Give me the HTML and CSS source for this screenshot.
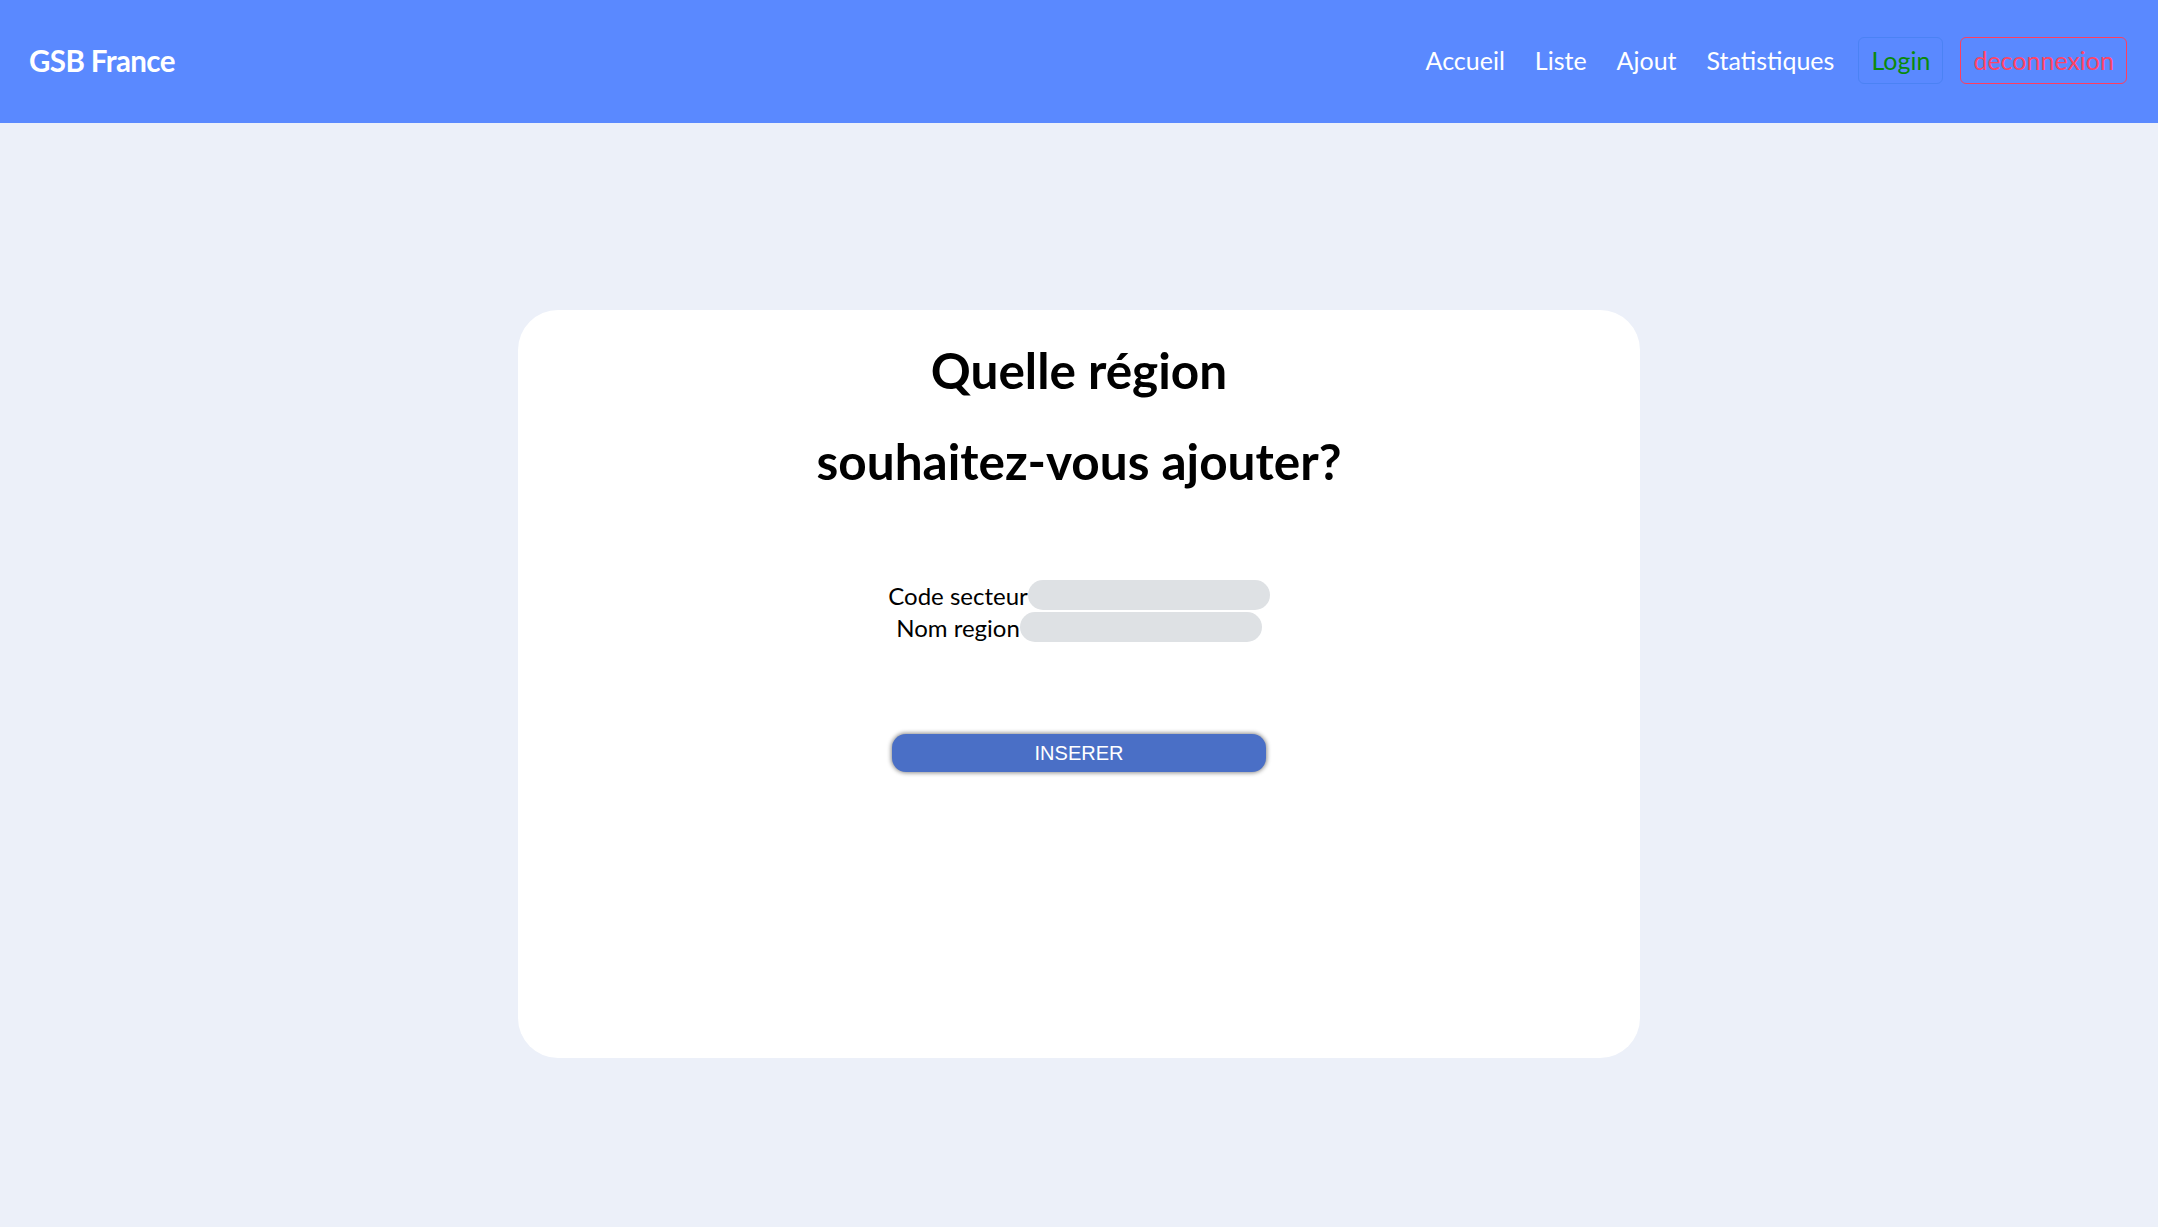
FILE: index.html
```html
<!DOCTYPE html>
<html lang="fr">
<head>
<meta charset="utf-8">
<title>GSB France</title>
<link rel="stylesheet" href="styles.css">
</head>
<body>
<nav class="navbar">
  <a class="brand" href="#">GSB France</a>
  <ul class="nav-links">
    <li><a href="#">Accueil</a></li>
    <li><a href="#">Liste</a></li>
    <li><a href="#">Ajout</a></li>
    <li><a href="#">Statistiques</a></li>
    <li><a class="btn-login" href="#">Login</a></li>
    <li><a class="btn-logout" href="#">deconnexion</a></li>
  </ul>
</nav>
<main class="page">
  <section class="card">
    <h1 class="title">Quelle région<br>souhaitez-vous ajouter?</h1>
    <form class="form">
      <div class="row"><label class="label">Code secteur</label><input class="field" type="text"></div>
      <div class="row"><label class="label">Nom region</label><input class="field" type="text"></div>
      <button class="submit" type="button">INSERER</button>
    </form>
  </section>
</main>
</body>
</html>
```
FILE: styles.css
```css
* { box-sizing: border-box; }
html, body { margin: 0; padding: 0; }
body {
  background: #ecf0f9;
  font-family: Lato, "Open Sans", sans-serif;
  color: #000;
  min-height: 1227px;
}
.navbar {
  height: 123px;
  background: #5a89ff;
  display: flex;
  align-items: center;
  justify-content: space-between;
  padding: 0 31px 0 29px;
}
.brand {
  color: #fff;
  text-decoration: none;
  font-size: 29.5px;
  font-weight: 700;
  letter-spacing: -0.6px;
  margin-top: -2px;
}
.nav-links {
  list-style: none;
  margin: -2px 0 0;
  padding: 0;
  display: flex;
  align-items: center;
}
.nav-links a {
  display: block;
  color: #fff;
  text-decoration: none;
  font-size: 25px;
  padding: 0 15px;
  line-height: 45px;
}
.nav-links .btn-login {
  color: #0a8a0a;
  border: 1px solid #4b82f4;
  border-radius: 6px;
  padding: 0 12px;
  margin-left: 9px;
}
.nav-links .btn-logout {
  color: #ff4466;
  border: 1.5px solid #ff3d5e;
  border-radius: 6px;
  padding: 0 12px;
  margin-left: 17px;
}
.page {
  display: flex;
  justify-content: center;
  padding-top: 187px;
}
.card {
  width: 1122px;
  height: 748px;
  background: #fff;
  border-radius: 40px;
  padding-top: 15px;
  text-align: center;
}
.title {
  margin: 0;
  font-size: 49.5px;
  font-weight: 700;
  line-height: 91px;
}
.form {
  margin-top: 73px;
}
.row {
  display: flex;
  justify-content: center;
  align-items: center;
  height: 30px;
  margin-bottom: 2px;
}
.label {
  font-size: 24px;
}
.field {
  width: 242px;
  height: 30px;
  border: none;
  border-radius: 15px;
  background: #dee1e4;
  margin: 0;
  padding: 0 12px;
}
.submit {
  display: block;
  margin: 92px auto 0;
  width: 374px;
  height: 38px;
  border: none;
  border-radius: 14px;
  background: #4a6fc6;
  color: #fff;
  font-family: "Liberation Sans", Arial, sans-serif;
  font-size: 20px;
  box-shadow: 0 0 4px 1px rgba(0,0,0,0.45);
}
```
